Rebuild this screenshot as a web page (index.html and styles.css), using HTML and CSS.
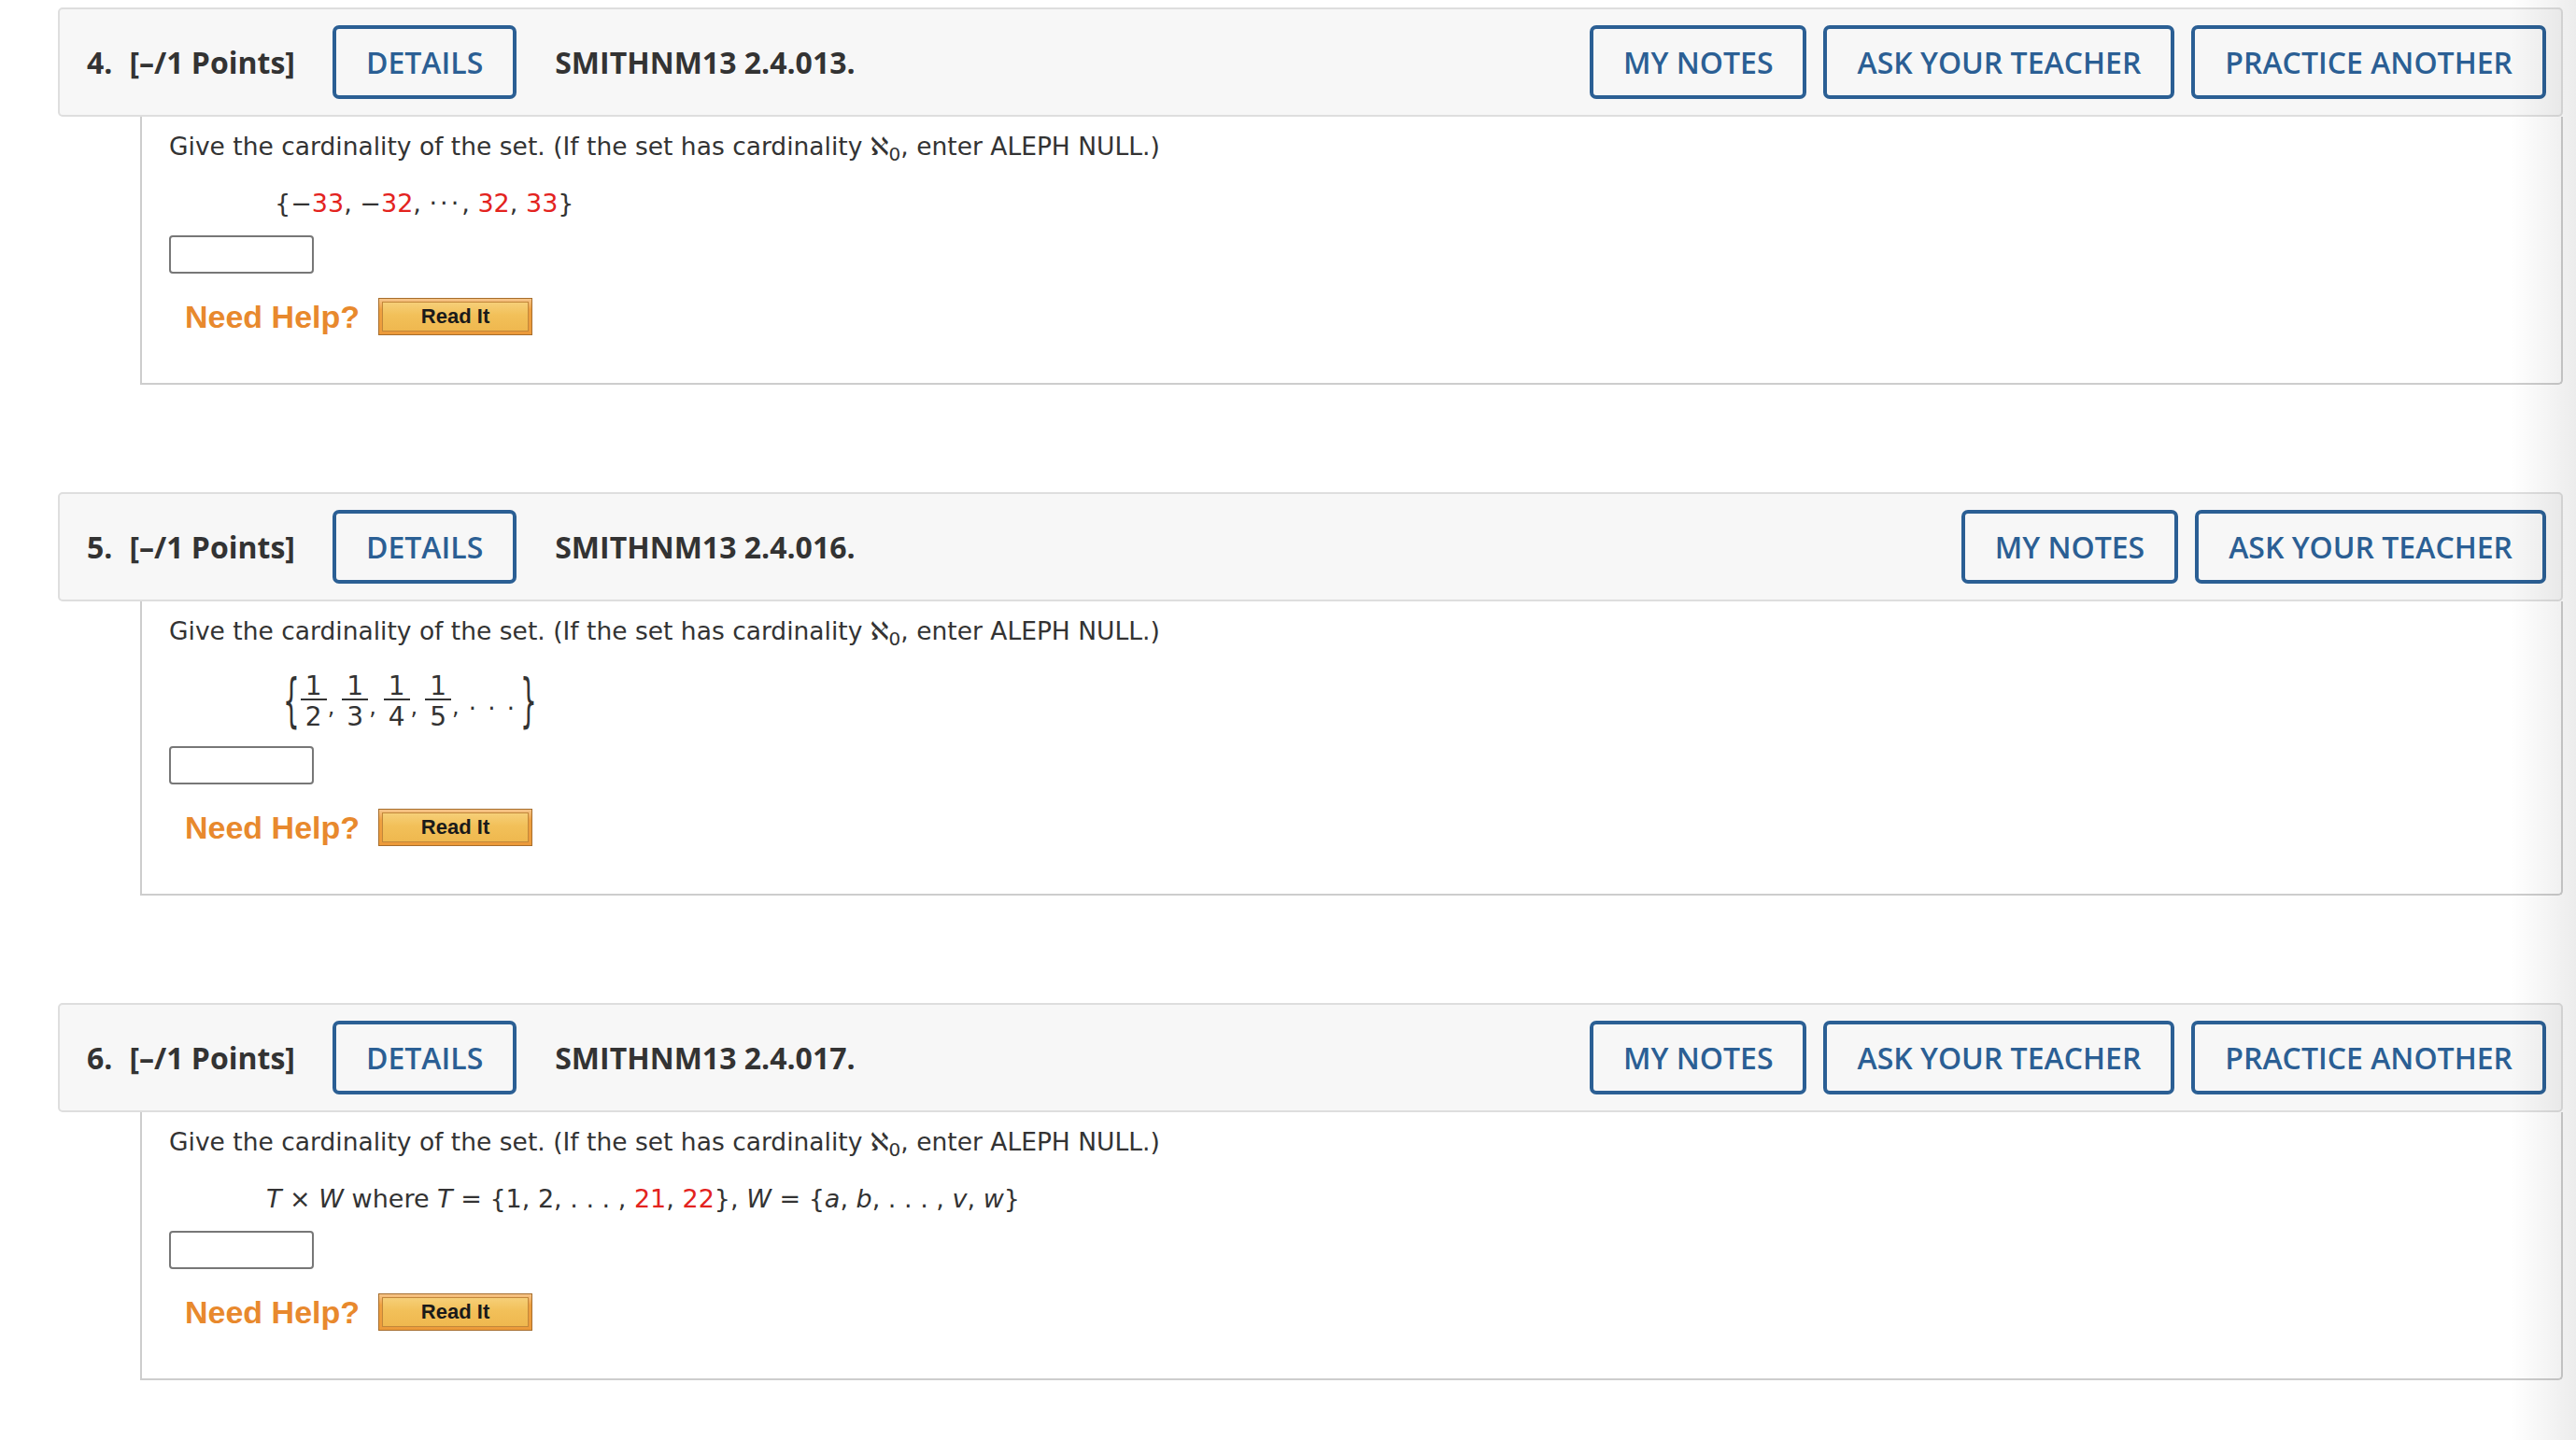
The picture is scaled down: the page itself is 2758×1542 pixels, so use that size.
FILE: index.html
```html
<!DOCTYPE html>
<html lang="en">
<head>
<meta charset="utf-8">
<title>Questions</title>
<link rel="stylesheet" href="styles.css">
</head>
<body>
<div class="page">

  <section class="q">
    <div class="qhead">
      <span class="qnum">4.</span>
      <span class="qpts">[–/1 Points]</span>
      <button class="btn details">DETAILS</button>
      <span class="qid">SMITHNM13 2.4.013.</span>
      <div class="actions">
        <button class="btn">MY NOTES</button>
        <button class="btn">ASK YOUR TEACHER</button>
        <button class="btn">PRACTICE ANOTHER</button>
      </div>
    </div>
    <div class="qbody">
      <p class="prompt">Give the cardinality of the set. (If the set has cardinality ℵ<sub>0</sub>, enter ALEPH NULL.)</p>
      <div class="math m4">{−<span class="r">33</span>, −<span class="r">32</span>, <span class="cdots">···</span>, <span class="r">32</span>, <span class="r">33</span>}</div>
      <input class="answer" type="text">
      <div class="help"><span class="need">Need Help?</span><span class="readit"><span>Read It</span></span></div>
    </div>
  </section>

  <section class="q">
    <div class="qhead">
      <span class="qnum">5.</span>
      <span class="qpts">[–/1 Points]</span>
      <button class="btn details">DETAILS</button>
      <span class="qid">SMITHNM13 2.4.016.</span>
      <div class="actions">
        <button class="btn">MY NOTES</button>
        <button class="btn">ASK YOUR TEACHER</button>
      </div>
    </div>
    <div class="qbody">
      <p class="prompt">Give the cardinality of the set. (If the set has cardinality ℵ<sub>0</sub>, enter ALEPH NULL.)</p>
      <div class="math fracrow">
        <span class="brace">{</span>
        <span class="frac"><span class="num">1</span><span class="den">2</span></span><span class="comma">,</span>
        <span class="frac"><span class="num">1</span><span class="den">3</span></span><span class="comma">,</span>
        <span class="frac"><span class="num">1</span><span class="den">4</span></span><span class="comma">,</span>
        <span class="frac"><span class="num">1</span><span class="den">5</span></span><span class="comma">,</span>
        <span class="dots">. . .</span>
        <span class="brace">}</span>
      </div>
      <input class="answer" type="text">
      <div class="help"><span class="need">Need Help?</span><span class="readit"><span>Read It</span></span></div>
    </div>
  </section>

  <section class="q">
    <div class="qhead">
      <span class="qnum">6.</span>
      <span class="qpts">[–/1 Points]</span>
      <button class="btn details">DETAILS</button>
      <span class="qid">SMITHNM13 2.4.017.</span>
      <div class="actions">
        <button class="btn">MY NOTES</button>
        <button class="btn">ASK YOUR TEACHER</button>
        <button class="btn">PRACTICE ANOTHER</button>
      </div>
    </div>
    <div class="qbody">
      <p class="prompt">Give the cardinality of the set. (If the set has cardinality ℵ<sub>0</sub>, enter ALEPH NULL.)</p>
      <div class="math m6"><i>T</i> × <i>W</i> where <i>T</i> = {1, 2, . . . , <span class="r">21</span>, <span class="r">22</span>}, <i>W</i> = {<i>a</i>, <i>b</i>, . . . , <i>v</i>, <i>w</i>}</div>
      <input class="answer" type="text">
      <div class="help"><span class="need">Need Help?</span><span class="readit"><span>Read It</span></span></div>
    </div>
  </section>

</div>
<div class="edge-shade"></div>
</body>
</html>
```

FILE: styles.css
```css
* { box-sizing: border-box; }
html, body { margin: 0; padding: 0; background: #fff; }
body { font-family: "DejaVu Sans", Verdana, sans-serif; color: #333; }

.page { padding: 8px 14px 40px 62px; }
.q { margin-bottom: 115px; }

.qhead {
  display: flex;
  align-items: center;
  height: 117px;
  background: #f7f7f7;
  border: 2px solid #dedede;
  border-radius: 5px;
  padding: 0 16px 0 29px;
  font-family: "Open Sans", sans-serif;
  font-weight: 700;
  font-size: 32px;
  color: #333;
  white-space: nowrap;
}
.qpts { margin-left: 18px; }
.qid { margin-left: 41px; }

.btn {
  font-family: "Open Sans", sans-serif;
  font-weight: 600;
  font-size: 32px;
  color: #2b5f94;
  background: transparent;
  border: 4px solid #2b5f94;
  border-radius: 7px;
  height: 79px;
  padding: 0 32px;
  margin: 0;
  white-space: nowrap;
}
.details { margin-left: 40px; }
.actions { margin-left: auto; display: flex; gap: 18px; }

.qbody {
  margin-left: 88px;
  border: 2px solid #cdcdcd;
  border-top: 0;
  border-radius: 0 0 5px 0;
  padding: 14px 20px 51px 29px;
  background: #fff;
}
.prompt { margin: 0; font-size: 26.5px; line-height: 36px; color: #333; }
.prompt sub { font-size: 20px; line-height: 0; vertical-align: -6px; }

.math { margin: 25px 0 0 113px; font-size: 27px; line-height: 36px; color: #333; white-space: nowrap; }
.cdots { letter-spacing: 3px; }
.m6 { margin-left: 104px; }
.r { color: #e3231e; }

.fracrow {
  display: flex;
  align-items: center;
  height: 64px;
  margin-left: 122px;
  font-size: 28px;
}
.brace { display: inline-block; font-size: 28px; transform: scaleY(2.2); line-height: 24px; margin-right: 1px; }
.frac { display: inline-flex; flex-direction: column; align-items: center; }
.num { display: block; line-height: 22px; padding: 0 5px 2px; border-bottom: 2px solid #333; }
.den { display: block; line-height: 22px; padding-top: 7px; }
.comma { margin-top: 12px; margin-right: 8px; margin-left: 1px; font-size: 24px; }
.dots { margin: 0 4px 0 2px; font-size: 26px; letter-spacing: 2px; }

.answer {
  display: block;
  margin-top: 16px;
  width: 155px;
  height: 41px;
  border: 2px solid #777;
  border-radius: 4px;
  background: #fff;
}

.help { display: flex; align-items: center; margin-top: 26px; margin-left: 17px; gap: 20px; }
.need { font-family: "Liberation Sans", Arial, sans-serif; font-weight: 700; font-size: 34px; color: #e8892d; }
.readit {
  display: flex;
  width: 165px;
  height: 40px;
  padding: 3px;
  background: linear-gradient(#f6c58a, #eea040 30%, #ec9a3a);
  border: 1px solid #a66d2c;
}
.readit span {
  flex: 1;
  display: flex;
  align-items: center;
  justify-content: center;
  background: linear-gradient(#f6cf78, #f2c059 45%, #efb84f);
  border: 1px solid #c2873a;
  font-family: "Liberation Sans", Arial, sans-serif;
  font-weight: 700;
  font-size: 22px;
  color: #1a1a1a;
}

.edge-shade {
  position: absolute;
  top: 0;
  right: 0;
  width: 70px;
  height: 1542px;
  background: linear-gradient(to right, rgba(0,0,0,0), rgba(0,0,0,0.075));
  pointer-events: none;
}
```
